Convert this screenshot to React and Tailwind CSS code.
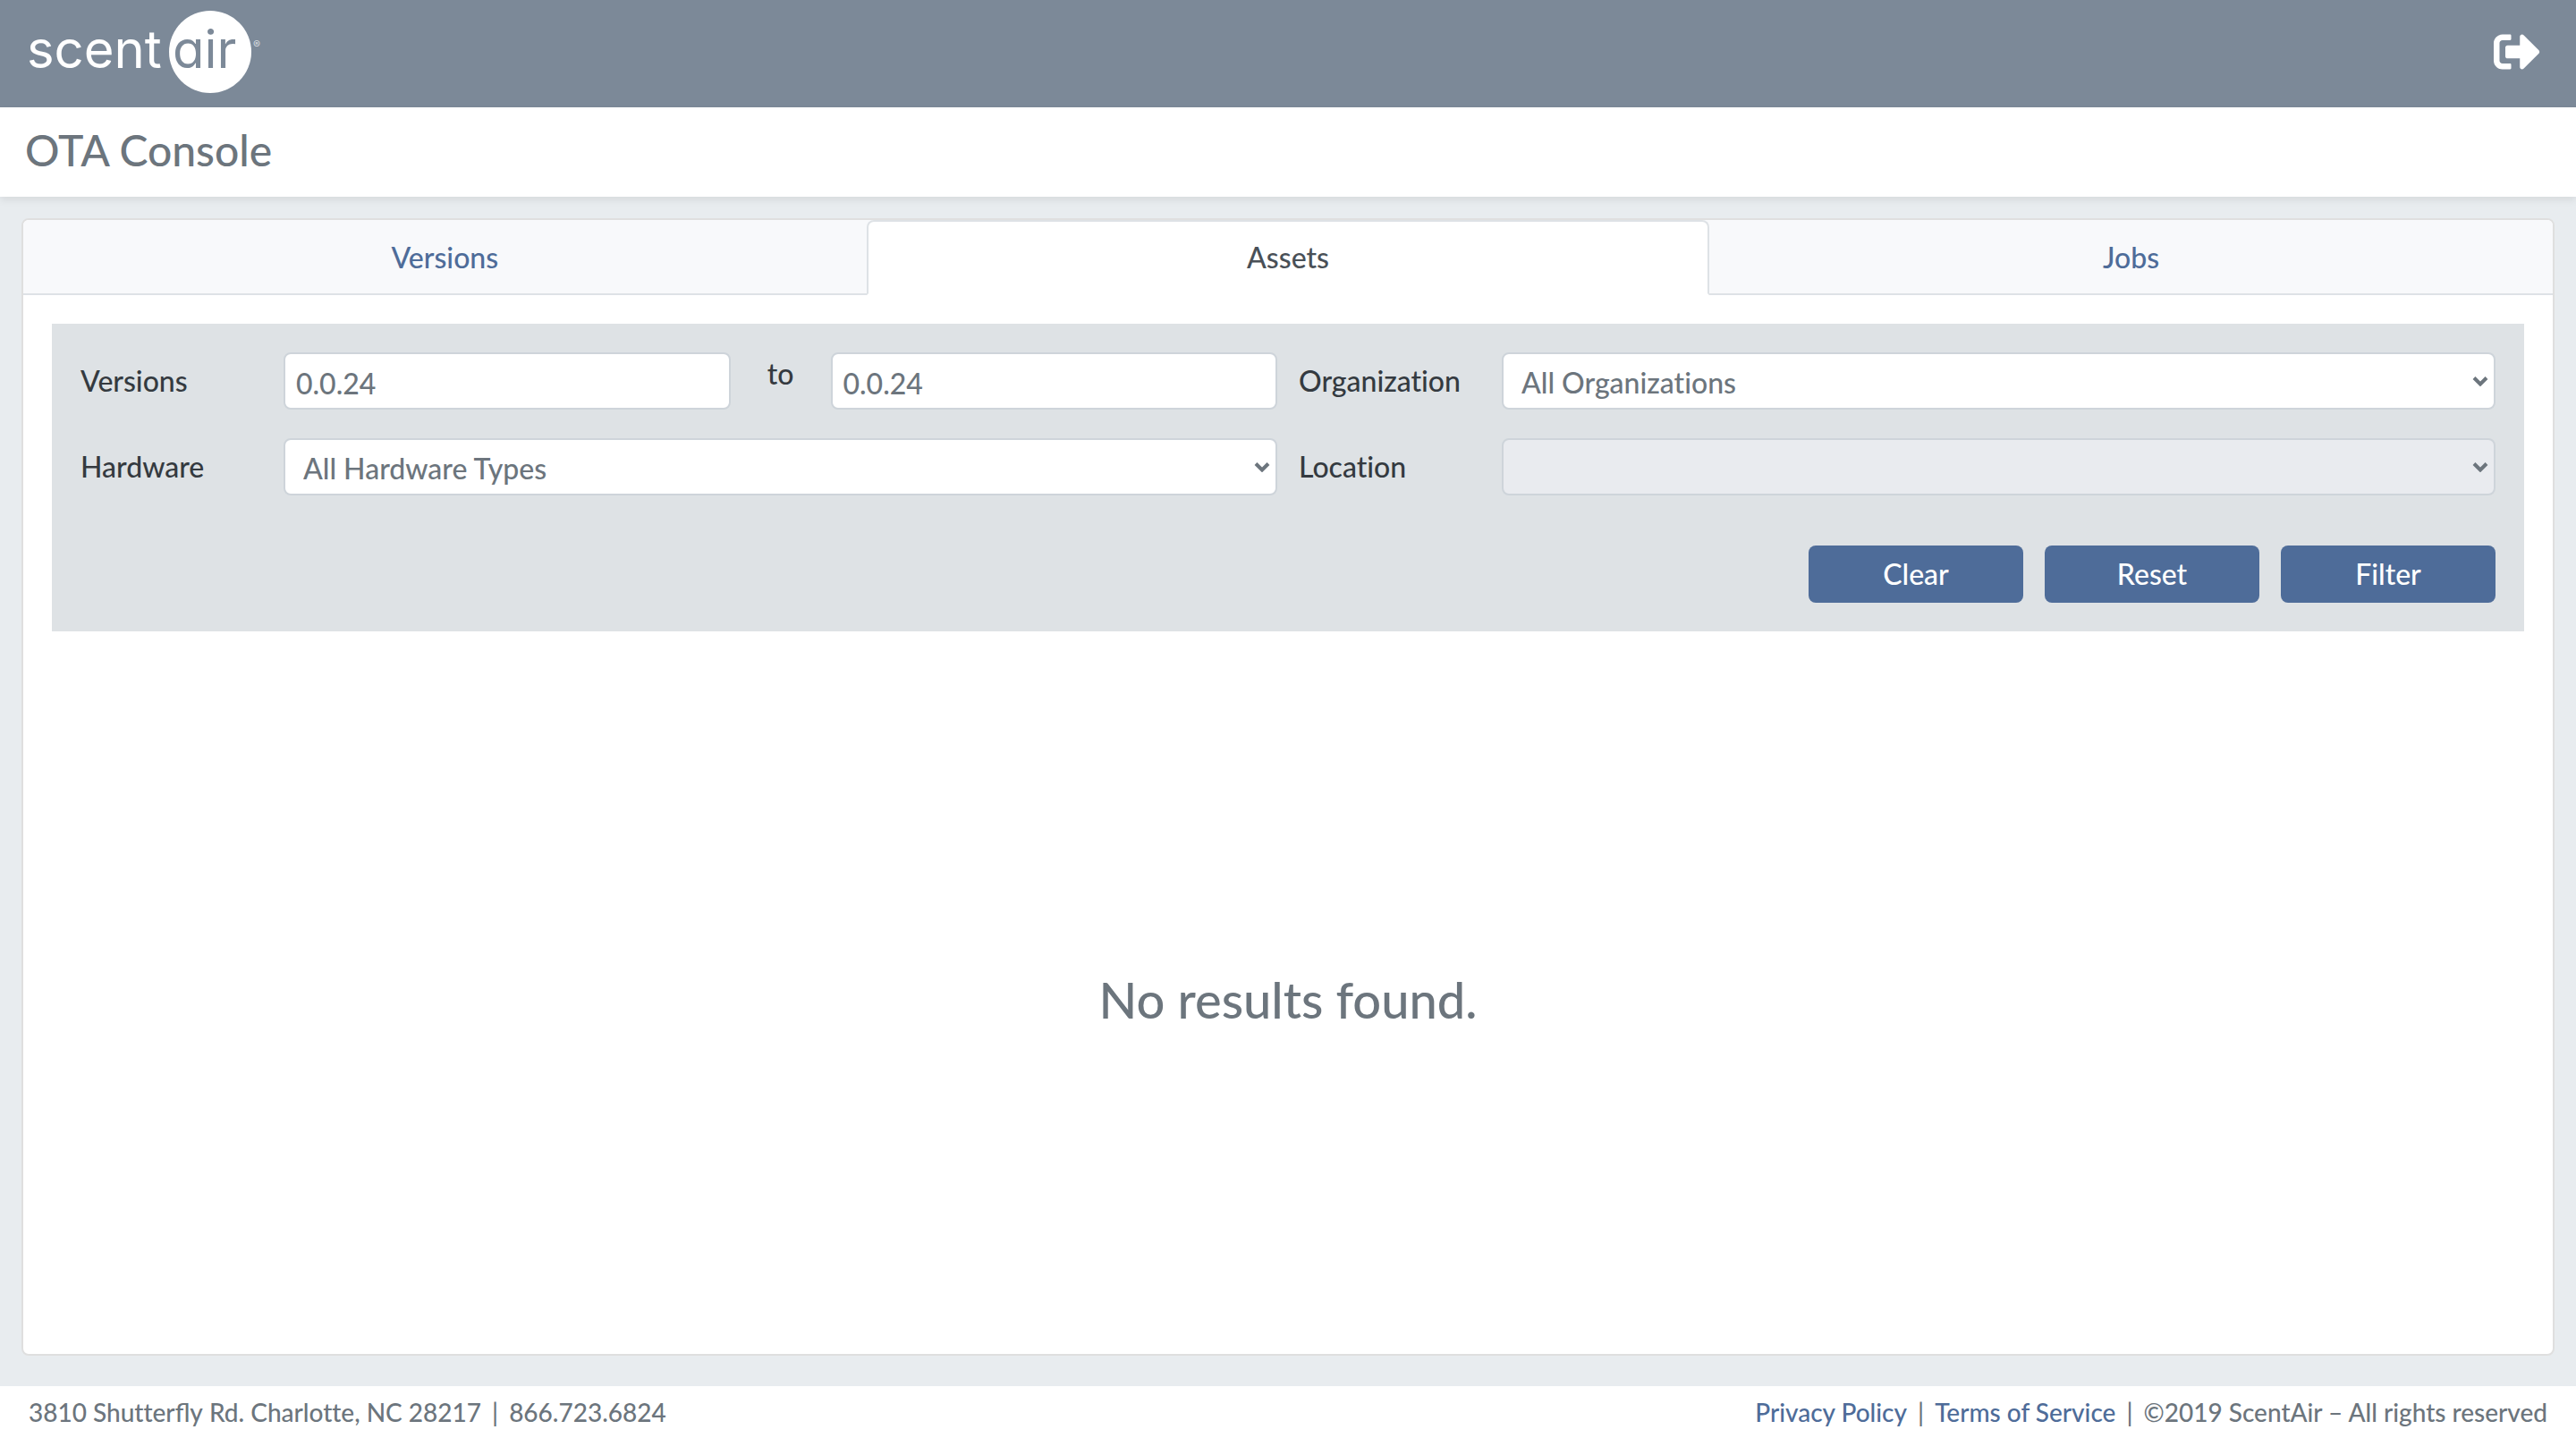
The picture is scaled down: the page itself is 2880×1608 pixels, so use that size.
import { FaSignOutAlt } from "react-icons/fa";

const control =
  "h-16 w-full min-w-0 rounded-lg border-2 border-[#ced4da] text-[32px] font-medium text-[#6c757d] disabled:bg-[#e9ebef] disabled:opacity-100";

const tabs = [
  { name: "Versions" },
  { name: "Assets", active: true },
  { name: "Jobs" },
];

function Logo() {
  return (
    <svg viewBox="0 0 270 104" className="h-[104px] w-[270px]" role="img" aria-label="scentair">
      <circle cx="205" cy="52" r="46" fill="#fff" />
      <g className="font-['Inter'] text-[58px] font-normal" style={{ fontFeatureSettings: '"cv11"' }}>
        <text x="0" y="70" fill="#fff">scent</text>
        <text x="163" y="70" fill="#7c8998">air</text>
      </g>
      <text x="253" y="48" className="font-['Inter'] text-[12px]" fill="#d3d8de">®</text>
    </svg>
  );
}

function Select({ id, children, disabled }) {
  return (
    <div className="relative col-span-5">
      <select id={id} disabled={disabled} className={`${control} appearance-none bg-white pt-1 pr-12 pl-5`}>
        {children}
      </select>
      <svg viewBox="0 0 18 12" className="pointer-events-none absolute top-[26px] right-2 h-3 w-[18px]" aria-hidden="true">
        <path d="M2 2.5 9 9.5 16 2.5" fill="none" stroke="#6c757d" strokeWidth="4" />
      </svg>
    </div>
  );
}

function Label({ htmlFor, children }) {
  return (
    <label htmlFor={htmlFor} className="whitespace-nowrap">
      {children}
    </label>
  );
}

export default function App() {
  return (
    <div className="flex min-h-screen flex-col bg-[#e8ecef] font-['Lato',sans-serif] text-[32px] leading-[48px] font-medium text-[#343a40] [font-variant-ligatures:none]">
      <header className="flex h-[120px] items-center justify-between bg-[#7c8998] pr-10 pb-1 pl-[30px]">
        <Logo />
        <button type="button" aria-label="Sign out" className="text-white">
          <FaSignOutAlt className="size-[52px]" />
        </button>
      </header>

      <div className="flex h-[100px] items-center bg-white px-7 pb-1 shadow-[0_4px_8px_rgba(0,0,0,0.075)]">
        <h1 className="text-[48px] text-[#6c757d]">OTA Console</h1>
      </div>

      <main className="mx-6 mt-6 mb-[34px] flex grow flex-col overflow-hidden rounded-lg border-2 border-[#dfdfdf] bg-white">
        <nav className="grid grid-cols-3 bg-[#f8f9fb]" role="tablist">
          {tabs.map((t) => (
            <button
              key={t.name}
              type="button"
              role="tab"
              aria-selected={!!t.active}
              className={
                t.active
                  ? "h-[84px] rounded-t-lg border-2 border-[#dee2e6] border-b-white bg-white text-[#495057]"
                  : "h-[84px] border-y-2 border-t-transparent border-b-[#dee2e6] text-[#4e6c99]"
              }
            >
              {t.name}
            </button>
          ))}
        </nav>

        <div className="flex grow flex-col p-8">
          <form className="bg-[#dee2e5] p-8" onSubmit={(e) => e.preventDefault()}>
            <div className="grid grid-cols-12 items-center gap-x-6 gap-y-8">
              <Label htmlFor="from">Versions</Label>
              <div className="col-span-5 flex">
                <input id="from" type="text" defaultValue="0.0.24" className={`${control} bg-white px-3 pt-1`} />
                <label htmlFor="to" className="w-28 shrink-0 text-center">to</label>
                <input id="to" type="text" defaultValue="0.0.24" className={`${control} bg-white px-3 pt-1`} />
              </div>
              <Label htmlFor="org">Organization</Label>
              <Select id="org">
                <option>All Organizations</option>
              </Select>
              <Label htmlFor="hardware">Hardware</Label>
              <Select id="hardware">
                <option>All Hardware Types</option>
              </Select>
              <Label htmlFor="location">Location</Label>
              <Select id="location" disabled />
            </div>
            <div className="mt-14 flex justify-end gap-6">
              {["Clear", "Reset", "Filter"].map((b) => (
                <button key={b} type="button" className="h-16 w-60 rounded-lg bg-[#4e6c99] text-white">
                  {b}
                </button>
              ))}
            </div>
          </form>
          <div className="flex grow items-center justify-center pt-12">
            <p className="text-[56px] text-[#6c757d]">No results found.</p>
          </div>
        </div>
      </main>

      <footer className="flex h-[58px] items-center justify-between bg-white px-8 text-[28px] text-[#6c757d]">
        <p className="flex gap-3">
          <span>
            3810 Shutter<span className="[font-variant-ligatures:common-ligatures]">fly</span> Rd. Charlotte, NC 28217
          </span>
          <span>|</span>
          <span>866.723.6824</span>
        </p>
        <p className="flex gap-3">
          <a href="#privacy" className="text-[#4e6c99]">Privacy Policy</a>
          <span>|</span>
          <a href="#terms" className="text-[#4e6c99]">Terms of Service</a>
          <span>|</span>
          <span>©2019 ScentAir – All rights reserved</span>
        </p>
      </footer>
    </div>
  );
}
